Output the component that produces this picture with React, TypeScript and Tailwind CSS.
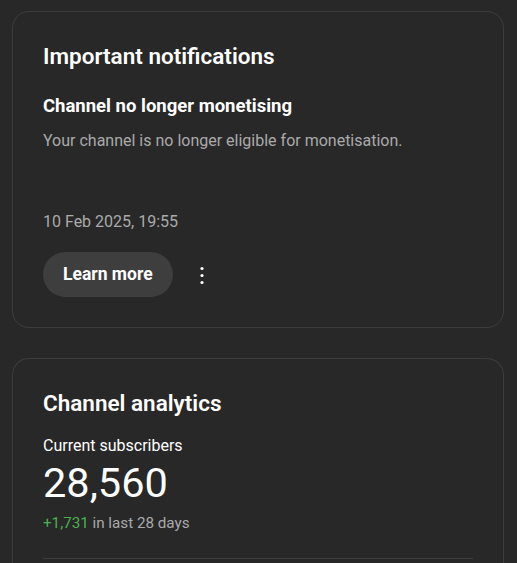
import React from "react";

function Kebab() {
  return (
    <svg width="24" height="24" viewBox="0 0 24 24" fill="#ffffff" aria-hidden>
      <circle cx="12" cy="5.5" r="1.6" />
      <circle cx="12" cy="12.5" r="1.6" />
      <circle cx="12" cy="19.5" r="1.6" />
    </svg>
  );
}

export default function App() {
  return (
    <div
      className="min-h-[563px] w-full bg-[#282828] pt-[11px] text-[#ffffff]"
      style={{ fontFamily: "Roboto, 'Noto Sans', Arial, sans-serif" }}
    >
      <div className="ml-[12px] flex w-[492px] flex-col rounded-[17px] border border-[#3d3d3d] p-[30px]">
        <h2 className="text-[22.5px] leading-[28px] font-semibold">Important notifications</h2>
        <div className="mt-[24px] text-[18.5px] leading-[24px] font-bold">Channel no longer monetising</div>
        <div className="mt-[12px] text-[16px] leading-[22px] text-[#aaaaaa]">
          Your channel is no longer eligible for monetisation.
        </div>
        <div className="mt-[59px] text-[16px] leading-[22px] text-[#aaaaaa]">10 Feb 2025, 19:55</div>
        <div className="mt-[19px] flex items-center">
          <button className="flex h-[45px] items-center rounded-full bg-[#3e3e3e] px-[20px] text-[17.5px] font-bold text-[#ffffff]">
            Learn more
          </button>
          <div className="ml-[17px] flex items-center">
            <Kebab />
          </div>
        </div>
      </div>

      <div className="ml-[12px] mt-[30px] flex w-[492px] flex-col rounded-t-[17px] border border-b-0 border-[#3d3d3d] px-[30px] pt-[30px]">
        <h2 className="text-[22.5px] leading-[28px] font-semibold">Channel analytics</h2>
        <div className="mt-[18px] text-[16px] leading-[22px]">Current subscribers</div>
        <div className="text-[41.5px] leading-[52px]">28,560</div>
        <div className="mt-[4px] text-[15.2px] leading-[20px] text-[#aaaaaa]">
          <span className="text-[#4caf50]">+1,731</span> in last 28 days
        </div>
        <div className="mt-[25px] h-px w-full bg-[#3d3d3d]" />
        <div className="h-[40px]" />
      </div>
    </div>
  );
}
